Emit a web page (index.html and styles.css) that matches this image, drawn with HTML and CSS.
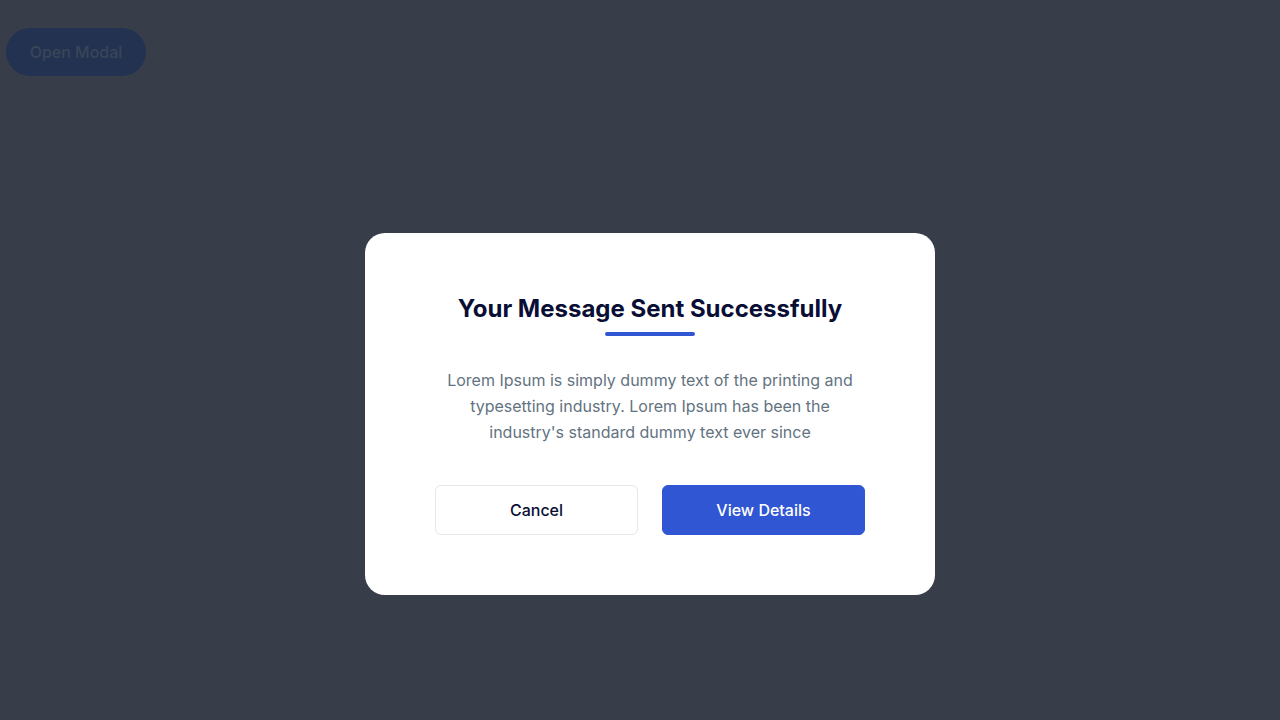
FILE: index.html
```html
<!DOCTYPE html>
<html>
<head>
    <title>Modal</title>
    <link rel="stylesheet" href="styles.css">
</head>
<body>
    <div class="page">
        <button type="button" class="open-modal">Open Modal</button>
    </div>

    <div class="overlay">
        <div class="modal">
            <h3 class="modal-title">Your Message Sent Successfully</h3>
            <span class="modal-line"></span>
            <p class="modal-text">
                Lorem Ipsum is simply dummy text of the printing and
                typesetting industry. Lorem Ipsum has been the
                industry's standard dummy text ever since
            </p>
            <div class="modal-actions">
                <button type="button" class="btn btn-cancel">Cancel</button>
                <button type="button" class="btn btn-primary">View Details</button>
            </div>
        </div>
    </div>
</body>
</html>
```

FILE: styles.css
```css
* {
    box-sizing: border-box;
}

body {
    margin: 0;
    font-family: Inter, "Noto Sans", sans-serif;
    background-color: #373e4a;
    min-height: 720px;
}

.page {
    padding: 28px 6px;
}

.open-modal {
    display: block;
    height: 48px;
    width: 140px;
    border: none;
    border-radius: 999px;
    background-color: #233251;
    color: #3a4559;
    font-family: Inter, sans-serif;
    font-size: 16px;
    font-weight: 500;
}

.overlay {
    position: fixed;
    inset: 0;
    display: flex;
    align-items: center;
    justify-content: center;
    padding: 108px 0 0 20px;
}

.modal {
    width: 570px;
    background-color: #fff;
    border-radius: 20px;
    padding: 60px 70px;
    text-align: center;
}

.modal-title {
    margin: 0;
    padding-bottom: 7px;
    font-size: 24px;
    line-height: 32px;
    font-weight: 700;
    color: #090e34;
}

.modal-line {
    display: block;
    width: 90px;
    height: 4px;
    margin: 0 auto 31px;
    border-radius: 4px;
    background-color: #3056d3;
}

.modal-text {
    margin: 0 0 40px;
    font-size: 16px;
    line-height: 26px;
    color: #637381;
}

.modal-actions {
    display: grid;
    grid-template-columns: 1fr 1fr;
    gap: 24px;
}

.btn {
    height: 50px;
    border-radius: 6px;
    font-family: Inter, sans-serif;
    font-size: 16px;
    font-weight: 500;
    cursor: pointer;
}

.btn-cancel {
    background-color: #fff;
    border: 1px solid #e7e7e7;
    color: #090e34;
}

.btn-primary {
    background-color: #3056d3;
    border: 1px solid #3056d3;
    color: #fff;
}
```
